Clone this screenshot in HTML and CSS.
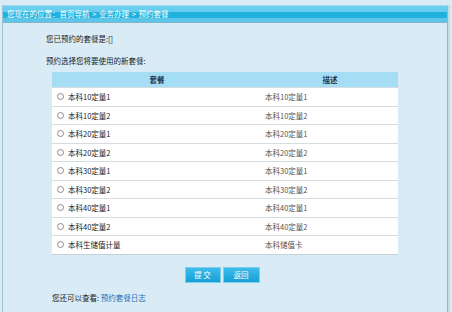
FILE: index.html
```html
<!DOCTYPE html>
<html lang="zh">
<head>
<meta charset="utf-8">
<title>预约套餐</title>
<link rel="stylesheet" href="styles.css">
</head>
<body>
<div class="frame">
  <div class="bar">您现在的位置：首页导航 &gt; 业务办理 &gt; 预约套餐</div>
  <div class="content">
    <p class="line first">您已预约的套餐是:[]</p>
    <p class="line second">预约选择您将要使用的新套餐:</p>
    <table class="pkg">
      <thead>
        <tr><th class="c1">套餐</th><th class="c2">描述</th></tr>
      </thead>
      <tbody>
        <tr><td class="c1"><label><input type="radio" name="p"><span>本科10定量1</span></label></td><td class="c2">本科10定量1</td></tr>
        <tr><td class="c1"><label><input type="radio" name="p"><span>本科10定量2</span></label></td><td class="c2">本科10定量2</td></tr>
        <tr><td class="c1"><label><input type="radio" name="p"><span>本科20定量1</span></label></td><td class="c2">本科20定量1</td></tr>
        <tr><td class="c1"><label><input type="radio" name="p"><span>本科20定量2</span></label></td><td class="c2">本科20定量2</td></tr>
        <tr><td class="c1"><label><input type="radio" name="p"><span>本科30定量1</span></label></td><td class="c2">本科30定量1</td></tr>
        <tr><td class="c1"><label><input type="radio" name="p"><span>本科30定量2</span></label></td><td class="c2">本科30定量2</td></tr>
        <tr><td class="c1"><label><input type="radio" name="p"><span>本科40定量1</span></label></td><td class="c2">本科40定量1</td></tr>
        <tr><td class="c1"><label><input type="radio" name="p"><span>本科40定量2</span></label></td><td class="c2">本科40定量2</td></tr>
        <tr><td class="c1"><label><input type="radio" name="p"><span>本科生储值计量</span></label></td><td class="c2">本科储值卡</td></tr>
      </tbody>
    </table>
    <div class="actions">
      <button class="btn" type="button">提 交</button>
      <button class="btn" type="button">返回</button>
    </div>
    <p class="line foot">您还可以查看: <a href="#" class="link">预约套餐日志</a></p>
  </div>
</div>
</body>
</html>
```

FILE: styles.css
```css
html, body {
  margin: 0;
  padding: 0;
  height: 100%;
}
body {
  background: #d9ecf5;
  font-family: "Noto Sans CJK SC", "Noto Sans", sans-serif;
  font-size: 7.5px;
  color: #1a1a1a;
  overflow: hidden;
}
.frame {
  margin: 5px 4px 0 2px;
  border-top: 1px solid #a9d8ea;
  border-left: 1px solid #a2bfce;
  border-right: 1px solid #9ab6c5;
  box-shadow: 2px 0 0 #c4dbe6;
  height: 306px;
}
.bar {
  height: 16px;
  line-height: 16px;
  padding-left: 4px;
  color: #fff;
  word-spacing: 1px;
  background: linear-gradient(#6bcff0 0, #66cdee 6px, #1fb2df 6px, #1fb2df 12px, #5cc6ea 12px, #5cc6ea 16px);
  border-bottom: 1px solid #86b3c6;
}
.content {
  padding-left: 43px;
  width: 346px;
}
.line {
  margin: 0;
  height: 10px;
  line-height: 10px;
}
.first { margin-top: 11px; }
.second { margin-top: 12px; }
.pkg {
  margin: 6px 0 0 6px;
  width: 346px;
  border-collapse: collapse;
  background: #fff;
}
.pkg th {
  height: 15px;
  padding: 0;
  background: #a5def4;
  color: #1c3550;
  font-weight: bold;
  text-align: center;
}
.pkg th.c1 { width: 210px; }
.pkg td {
  height: 17.5px;
  padding: 0;
  border-top: 1px solid #d3dde2;
}
.pkg tbody tr:last-child td { border-bottom: 1px solid #c3d1d8; }
.pkg td.c1 { padding-left: 5px; }
.pkg td.c2 { padding-left: 3px; color: #555; }
.pkg label {
  display: flex;
  align-items: center;
  gap: 4px;
}
.pkg input {
  appearance: none;
  -webkit-appearance: none;
  margin: 0;
  width: 7px;
  height: 7px;
  border: 1px solid #8b8b8b;
  border-radius: 50%;
  background: #fff;
  box-sizing: border-box;
}
.actions {
  display: flex;
  justify-content: center;
  gap: 2px;
  margin: 12px 0 0 6px;
}
.btn {
  width: 36px;
  height: 16px;
  padding: 0;
  border: 1px solid #7fcdec;
  background: linear-gradient(#3dbdea, #159fd8);
  color: #fff;
  font-family: inherit;
  font-size: 7.5px;
  line-height: 14px;
}
.btn + .btn { width: 37px; }
.foot {
  margin: 10px 0 0 6px;
}
.link {
  color: #1c6fb8;
  text-decoration: none;
}
```
